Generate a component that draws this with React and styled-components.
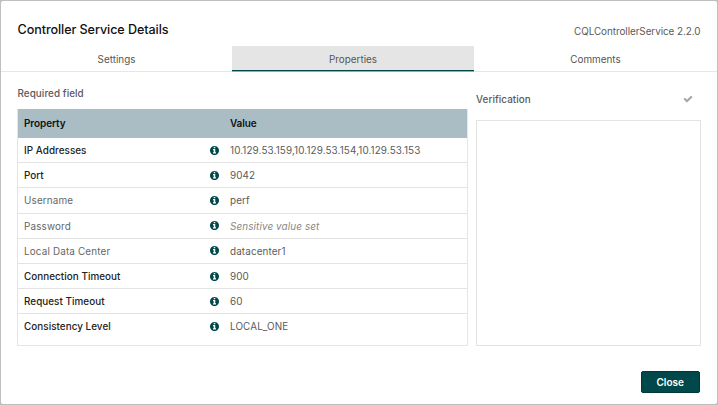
import React from "react";
import styled, { createGlobalStyle } from "styled-components";

const GlobalStyle = createGlobalStyle`
  *, *::before, *::after { box-sizing: border-box; }
  body {
    margin: 0;
    background: #bfbfbf;
    font-family: Inter, "Liberation Sans", sans-serif;
    color: #5a5a5a;
  }
`;

const Backdrop = styled.div`
  height: 405px;
  padding: 1px;
  overflow: hidden;
`;

const Dialog = styled.section`
  display: flex;
  flex-direction: column;
  height: 403px;
  background: #fff;
  border-radius: 2px;
`;

const Header = styled.header`
  display: flex;
  justify-content: space-between;
  align-items: center;
  height: 45px;
  padding: 13px 16.5px 0;
`;

const Title = styled.h2`
  margin: 0;
  font-size: 12.6px;
  line-height: 20px;
  font-weight: 500;
  letter-spacing: -0.08px;
  color: #111;
`;

const Version = styled.span`
  font-size: 9.9px;
  line-height: 16px;
  padding-top: 1px;
  letter-spacing: -0.05px;
`;

const TabBar = styled.nav`
  display: grid;
  grid-template-columns: 231px 242px 1fr;
  height: 26px;
  border-bottom: 1px solid #e6e6e6;
`;

const Tab = styled.button`
  height: 26px;
  margin: 0;
  padding: 0;
  border: 0;
  border-bottom: 1px solid ${(p) => (p.$active ? "#8fabac" : "transparent")};
  box-shadow: ${(p) => (p.$active ? "inset 0 -1px #004849" : "none")};
  background: ${(p) => (p.$active ? "#e5e5e5" : "transparent")};
  color: #555;
  font: 400 9.9px/24px Inter, "Liberation Sans", sans-serif;
  letter-spacing: 0;
`;

const Content = styled.main`
  display: grid;
  grid-template-columns: 451px 225px;
  column-gap: 8px;
  height: 274px;
  padding-left: 16px;
`;

const Panel = styled.div`
  display: flex;
  flex-direction: column;
`;

const PanelHeading = styled.div`
  display: flex;
  justify-content: space-between;
  align-items: center;
  height: ${(p) => p.$height}px;
  padding: ${(p) => p.$top}px 8px 0 ${(p) => p.$left || 0}px;
  font-size: 9.9px;
  line-height: 14px;
  font-weight: 500;
  letter-spacing: 0.06px;
`;

const PropertyTable = styled.div`
  height: 237px;
  border: 1px solid #e6e6e6;
  border-top: 0;
`;

const TableHead = styled.div`
  display: grid;
  grid-template-columns: 206px 1fr;
  align-items: center;
  height: 29px;
  padding: 0 0 1px 6px;
  background: #aabdc5;
  color: #111;
  font-size: 10px;
  font-weight: 600;
  letter-spacing: -0.09px;
`;

const PropertyRow = styled.div`
  display: grid;
  grid-template-columns: 185.5px 20.5px 1fr;
  align-items: center;
  height: 25.2px;
  padding-left: 6px;
  border-bottom: 1px solid #e3e3e3;
  font-size: 9.9px;
  letter-spacing: 0.12px;

  &:last-child { border-bottom-color: transparent; }
`;

const PropertyName = styled.span`
  font-weight: ${(p) => (p.$required ? 500 : 400)};
  color: ${(p) => (p.$required ? "#222" : "#666")};
  letter-spacing: ${(p) => (p.$required ? 0.04 : 0.16)}px;
`;

const PropertyValue = styled.span`
  color: ${(p) => (p.$sensitive ? "#888" : "#5a5a5a")};
  font-style: ${(p) => (p.$sensitive ? "italic" : "normal")};
`;

const Icon = styled.svg`
  display: block;
  width: ${(p) => p.$size}px;
  height: ${(p) => p.$size}px;
  fill: ${(p) => p.$color};
`;

const ResultBox = styled.div`
  height: 226px;
  border: 1px solid #e3e3e3;
`;

const Footer = styled.footer`
  display: flex;
  justify-content: flex-end;
  padding: 25px 17px 0 0;
`;

const CloseButton = styled.button`
  width: 59.5px;
  height: 22px;
  padding: 0;
  border: 1px solid #00393a;
  border-radius: 2px;
  background: #004849;
  color: #fff;
  font: 600 10px/18px Inter, "Liberation Sans", sans-serif;
`;

const InfoIcon = () => (
  <Icon $size={9} $color="#004849" viewBox="128 128 1536 1536">
    <path d="M1152 1376v-160q0-14-9-23t-23-9h-96v-512q0-14-9-23t-23-9h-320q-14 0-23 9t-9 23v160q0 14 9 23t23 9h96v320h-96q-14 0-23 9t-9 23v160q0 14 9 23t23 9h448q14 0 23-9t9-23zm-128-896v-160q0-14-9-23t-23-9h-192q-14 0-23 9t-9 23v160q0 14 9 23t23 9h192q14 0 23-9t9-23zm640 416q0 209-103 385.5t-279.5 279.5-385.5 103-385.5-103-279.5-279.5-103-385.5 103-385.5 279.5-279.5 385.5-103 385.5 103 279.5 279.5 103 385.5z" />
  </Icon>
);

const CheckIcon = () => (
  <Icon $size={10} $color="#a5a5a5" viewBox="0 0 1792 1792">
    <path d="M1671 566q0 40-28 68l-724 724-136 136q-28 28-68 28t-68-28l-136-136-362-362q-28-28-28-68t28-68l136-136q28-28 68-28t68 28l294 295 656-657q28-28 68-28t68 28l136 136q28 28 28 68z" />
  </Icon>
);

const properties = [
  { name: "IP Addresses", value: "10.129.53.159,10.129.53.154,10.129.53.153", required: true },
  { name: "Port", value: "9042", required: true },
  { name: "Username", value: "perf" },
  { name: "Password", value: "Sensitive value set", sensitive: true },
  { name: "Local Data Center", value: "datacenter1" },
  { name: "Connection Timeout", value: "900", required: true },
  { name: "Request Timeout", value: "60", required: true },
  { name: "Consistency Level", value: "LOCAL_ONE", required: true },
];

export default function App() {
  return (
    <Backdrop>
      <GlobalStyle />
      <Dialog>
        <Header>
          <Title>Controller Service Details</Title>
          <Version>CQLControllerService 2.2.0</Version>
        </Header>
        <TabBar>
          <Tab>Settings</Tab>
          <Tab $active>Properties</Tab>
          <Tab>Comments</Tab>
        </TabBar>
        <Content>
          <Panel>
            <PanelHeading $height={37} $top={5} $left={0.5}>Required field</PanelHeading>
            <PropertyTable>
              <TableHead>
                <span>Property</span>
                <span>Value</span>
              </TableHead>
              {properties.map((p) => (
                <PropertyRow key={p.name}>
                  <PropertyName $required={p.required}>{p.name}</PropertyName>
                  <InfoIcon />
                  <PropertyValue $sensitive={p.sensitive}>{p.value}</PropertyValue>
                </PropertyRow>
              ))}
            </PropertyTable>
          </Panel>
          <Panel>
            <PanelHeading $height={48} $top={6}>
              <span>Verification</span>
              <CheckIcon />
            </PanelHeading>
            <ResultBox />
          </Panel>
        </Content>
        <Footer>
          <CloseButton>Close</CloseButton>
        </Footer>
      </Dialog>
    </Backdrop>
  );
}
